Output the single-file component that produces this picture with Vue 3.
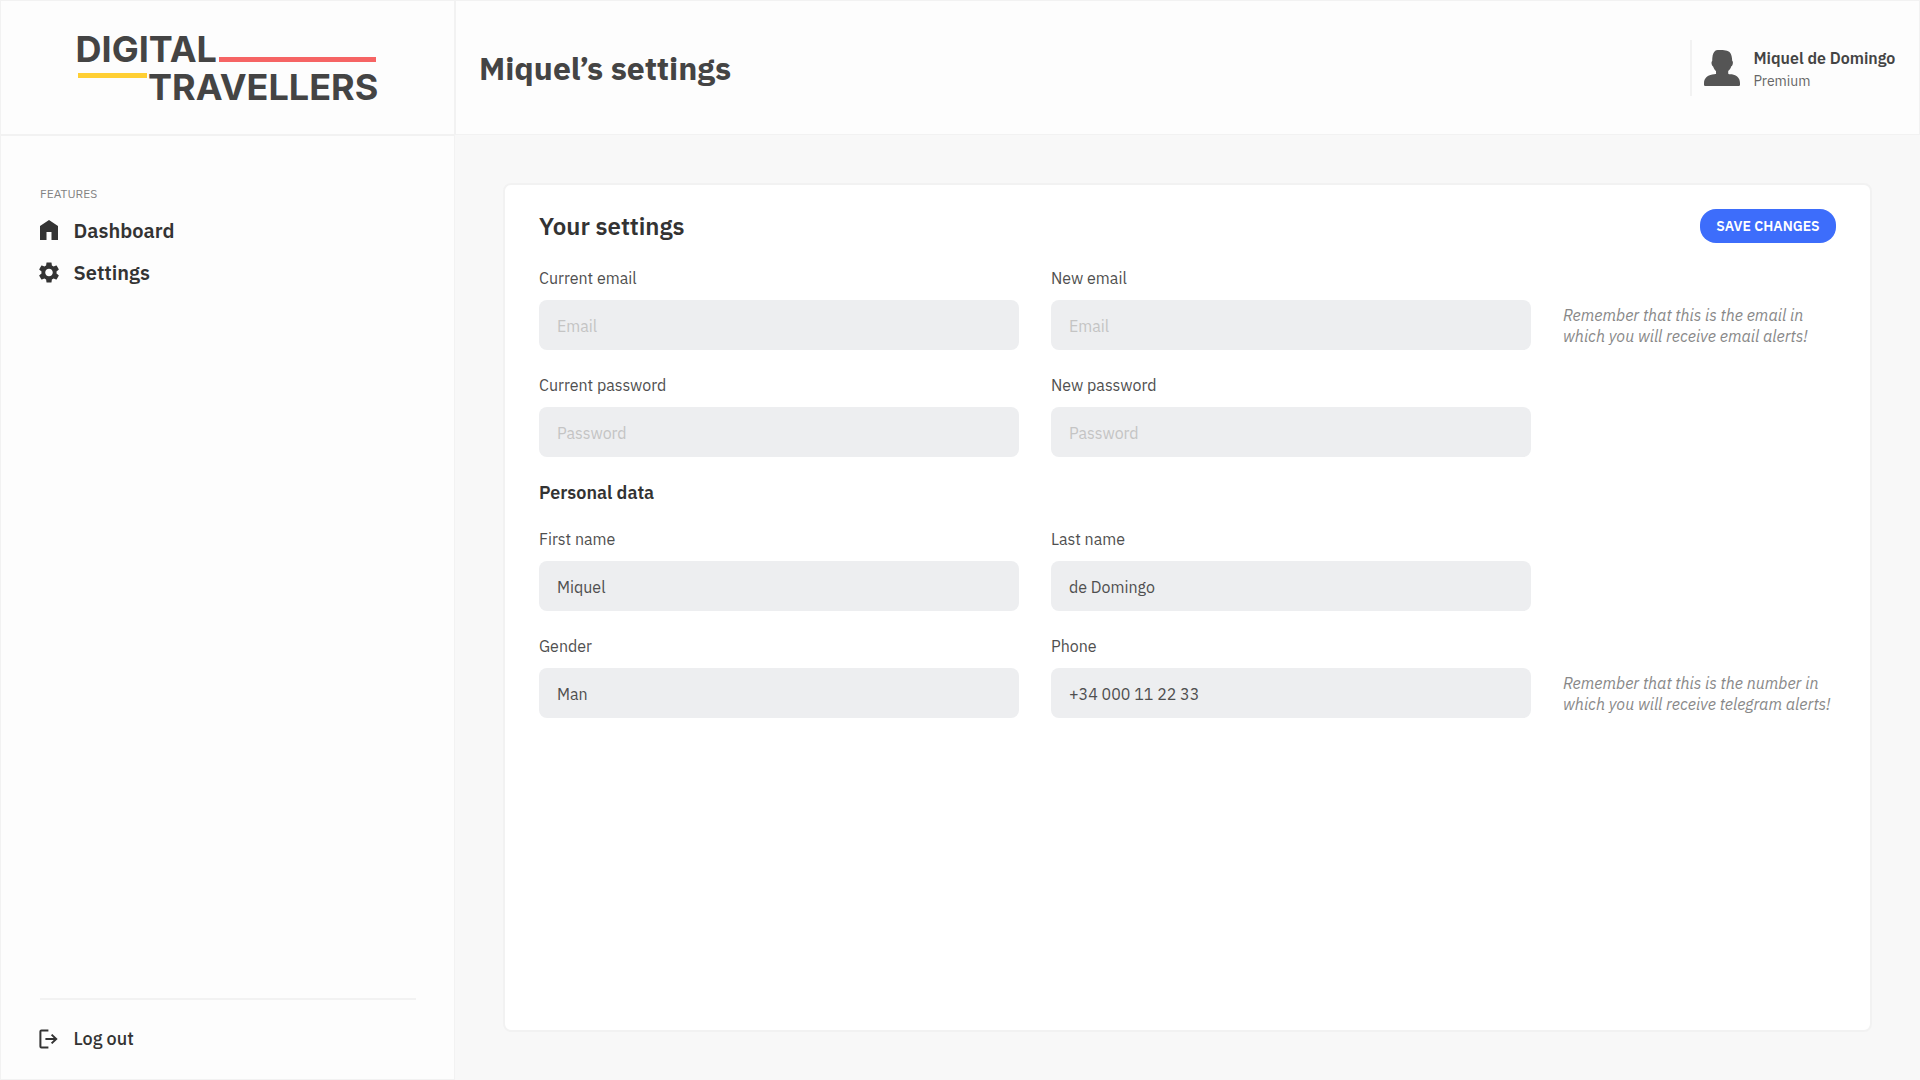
<script setup>
import { reactive } from 'vue'

const nav = [
  { name: 'Dashboard', icon: 'home' },
  { name: 'Settings', icon: 'gear' },
]

const account = reactive([
  {
    fields: [
      { id: 'current-email', label: 'Current email', type: 'email', placeholder: 'Email', value: '' },
      { id: 'new-email', label: 'New email', type: 'email', placeholder: 'Email', value: '' },
    ],
    note: ['Remember that this is the email in', 'which you will receive email alerts!'],
  },
  {
    fields: [
      { id: 'current-password', label: 'Current password', type: 'password', placeholder: 'Password', value: '' },
      { id: 'new-password', label: 'New password', type: 'password', placeholder: 'Password', value: '' },
    ],
  },
])

const personal = reactive([
  {
    fields: [
      { id: 'first-name', label: 'First name', type: 'text', value: 'Miquel' },
      { id: 'last-name', label: 'Last name', type: 'text', value: 'de Domingo' },
    ],
  },
  {
    fields: [
      { id: 'gender', label: 'Gender', type: 'text', value: 'Man' },
      { id: 'phone', label: 'Phone', type: 'tel', value: '+34 000 11 22 33' },
    ],
    note: ['Remember that this is the number in', 'which you will receive telegram alerts!'],
  },
])

const sections = [
  { title: '', rows: account },
  { title: 'Personal data', rows: personal },
]
</script>

<template>
  <div class="page">
    <aside class="sidebar">
      <div class="brand">
        <div class="logo">
          <div class="logo-line"><span class="first">DIGITAL</span><i class="bar red"></i></div>
          <div class="logo-line"><i class="bar yellow"></i><span>TRAVELLERS</span></div>
        </div>
      </div>
      <nav class="menu">
        <div class="menu-label">FEATURES</div>
        <a v-for="item in nav" :key="item.name" class="menu-item">
          <svg v-if="item.icon === 'home'" viewBox="0 0 24 24" class="icon">
            <path d="M12 1L21 7V21H14.5V13H9.5V21H3V7Z" />
          </svg>
          <svg v-else viewBox="0 0 24 24" class="icon">
            <path
              transform="translate(-.6 -1.1) scale(1.05)"
              d="M19.14 12.94c.04-.3.06-.61.06-.94 0-.32-.02-.64-.07-.94l2.03-1.58c.18-.14.23-.41.12-.61l-1.92-3.32c-.12-.22-.37-.29-.59-.22l-2.39.96c-.5-.38-1.03-.7-1.62-.94l-.36-2.54c-.04-.24-.24-.41-.48-.41h-3.84c-.24 0-.43.17-.47.41l-.36 2.54c-.59.24-1.13.57-1.62.94l-2.39-.96c-.22-.08-.47 0-.59.22L2.74 8.87c-.12.21-.08.47.12.61l2.03 1.58c-.05.3-.09.63-.09.94s.02.64.07.94l-2.03 1.58c-.18.14-.23.41-.12.61l1.92 3.32c.12.22.37.29.59.22l2.39-.96c.5.38 1.03.7 1.62.94l.36 2.54c.05.24.24.41.48.41h3.84c.24 0 .44-.17.47-.41l.36-2.54c.59-.24 1.13-.56 1.62-.94l2.39.96c.22.08.47 0 .59-.22l1.92-3.32c.12-.22.07-.47-.12-.61l-2.01-1.58zM12 15.6c-1.98 0-3.6-1.62-3.6-3.6s1.62-3.6 3.6-3.6 3.6 1.62 3.6 3.6-1.62 3.6-3.6 3.6z"
            />
          </svg>
          <span>{{ item.name }}</span>
        </a>
        <div class="menu-foot">
          <a class="menu-item logout">
            <svg viewBox="0 0 24 24" class="icon line">
              <path d="M11.4 3.5H4.4a1 1 0 0 0-1 1v15.1a1 1 0 0 0 1 1h7" />
              <path d="M8.4 12H19M14.6 7.6L19.2 12l-4.6 4.4" />
            </svg>
            <span>Log out</span>
          </a>
        </div>
      </nav>
    </aside>

    <div class="main">
      <header class="topbar">
        <h1>Miquel’s settings</h1>
        <div class="user">
          <svg class="avatar" viewBox="0 0 36 36">
            <path
              d="M10.6 1.600C11.500.3 13 0 17 .1c4.500.2 8.200 1 9.600 3.300 1 1.800 1.500 4.700 1.600 7.400.7.600.9 1.800.6 3-.3 1.400-.8 2.200-1.500 2.500-.6 2-1.700 3.500-3.100 4.700v2.300c0 .6.400.9 1 1h2.700C32.500 25.200 36 28 36 33v1.400c0 1-.6 1.600-1.600 1.600H1.600C.6 36 0 35.400 0 34.400V33c0-5 3.500-7.800 8.200-8.600 1.200-.1 2.500-.1 3.500-.3.500-.1.400-.6.300-1.100v-2c-1.300-1.200-2.300-2.700-2.900-4.600-.8-.4-1.200-1.300-1.500-2.600-.2-1.300-.1-2.300.6-2.900 0-3.500.4-7.300 2.400-9.300Z"
            />
          </svg>
          <div class="who">
            <div class="user-name">Miquel de Domingo</div>
            <div class="plan">Premium</div>
          </div>
        </div>
      </header>

      <main class="content">
        <section class="card">
          <div class="card-head">
            <h2>Your settings</h2>
            <button type="button" class="save">SAVE CHANGES</button>
          </div>
          <template v-for="section in sections" :key="section.title">
            <h3 v-if="section.title">{{ section.title }}</h3>
            <div class="rows">
              <div v-for="(row, r) in section.rows" :key="r" class="row">
                <div v-for="f in row.fields" :key="f.id" class="field">
                  <label :for="f.id">{{ f.label }}</label>
                  <input :id="f.id" v-model="f.value" :type="f.type" :placeholder="f.placeholder" />
                </div>
                <p v-if="row.note" class="note">
                  <span v-for="line in row.note" :key="line">{{ line }}</span>
                </p>
              </div>
            </div>
          </template>
        </section>
      </main>
    </div>
  </div>
</template>

<style>
body {
  margin: 0;
}
</style>

<style scoped>
.page,
.page * {
  box-sizing: border-box;
}
.page {
  display: flex;
  width: 1920px;
  height: 1080px;
  overflow: hidden;
  background: #f8f8f8;
  font-family: 'IBM Plex Sans', Roboto, sans-serif;
  color: #333;
}
.sidebar {
  display: flex;
  flex-direction: column;
  flex: none;
  width: 455px;
}
.brand {
  height: 135px;
  padding: 29px 0 0 74px;
  border: 1px solid #f2f2f2;
  background: #fdfdfd;
}
.logo {
  width: 301px;
  font: 700 36px/38px Inter, sans-serif;
  color: #444;
}
.logo-line {
  display: flex;
  height: 38px;
  white-space: nowrap;
}
.first {
  margin-left: 0.6px;
}
.bar {
  flex: none;
  height: 5px;
}
.red {
  width: 157px;
  margin: 27px 0 0 auto;
  background: #f66464;
}
.yellow {
  width: 69px;
  margin: 5px 1px 0 3px;
  background: #ffcf33;
}
.menu {
  display: flex;
  flex-direction: column;
  flex: 1;
  padding: 50px 39px 23px;
  border: 1px solid #f2f2f2;
  background: #fdfdfd;
}
.menu-label {
  margin-bottom: 8px;
  font-size: 12px;
  line-height: 16px;
  color: #828282;
}
.menu-item {
  display: flex;
  align-items: center;
  gap: 12.5px;
  height: 42px;
  margin-left: -3px;
  font-size: 20px;
  font-weight: 600;
  line-height: 42px;
}
.icon {
  flex: none;
  width: 24px;
  height: 24px;
  fill: #333;
}
.icon.line {
  fill: none;
  stroke: #333;
  stroke-width: 2;
}
.menu-foot {
  margin: auto -1px 0 0;
  padding-top: 21px;
  border-top: 2px solid #f2f2f2;
}
.logout {
  height: 35px;
  font-size: 18px;
  font-weight: 500;
  line-height: 35px;
}
.main {
  display: flex;
  flex-direction: column;
  flex: 1;
  min-width: 0;
}
.topbar {
  display: flex;
  align-items: center;
  height: 135px;
  padding-left: 23px;
  border: 1px solid #f2f2f2;
  background: #fdfdfd;
}
h1,
h2,
h3,
p {
  margin: 0;
}
h1 {
  padding-top: 1px;
  font-size: 32px;
  font-weight: 700;
  line-height: 38px;
  color: #444;
}
.user {
  display: flex;
  width: 229px;
  height: 56px;
  margin: 1px 0 0 auto;
  padding-left: 12px;
  border-left: 2px solid #f2f2f2;
}
.avatar {
  flex: none;
  width: 36px;
  height: 36px;
  margin: 10px 13.5px 0 0;
  fill: #555;
}
.who {
  padding-top: 8px;
}
.user-name {
  font-size: 16px;
  font-weight: 600;
  line-height: 21px;
  color: #444;
  white-space: nowrap;
}
.plan {
  margin-top: 2px;
  font-size: 14px;
  line-height: 20px;
  color: #666;
}
.content {
  display: flex;
  flex: 1;
  padding: 48px;
}
.card {
  flex: 1;
  min-width: 0;
  padding: 24px 34px;
  border: 2px solid #f2f2f2;
  border-radius: 8px;
  background: #fff;
}
.card-head {
  display: flex;
  justify-content: space-between;
  align-items: flex-start;
  height: 36px;
  margin-bottom: 23px;
}
h2 {
  font-size: 24px;
  font-weight: 600;
  line-height: 34px;
}
.save {
  width: 136px;
  height: 34px;
  padding: 0;
  border: 0;
  border-radius: 16px;
  background: #3d6dfb;
  font: 600 14px/34px 'IBM Plex Sans', Roboto, sans-serif;
  color: #fff;
}
h3 {
  margin: 18px 0 19px;
  font-size: 18px;
  font-weight: 600;
  line-height: 35px;
}
.rows {
  display: flex;
  flex-direction: column;
  gap: 25px;
}
.row {
  display: flex;
  gap: 32px;
}
.field {
  display: flex;
  flex: none;
  flex-direction: column;
  gap: 11px;
  width: 480px;
}
label {
  font-size: 16px;
  line-height: 21px;
  color: #4f4f4f;
}
input {
  height: 50px;
  padding: 1px 18px 0;
  border: 0;
  border-radius: 8px;
  outline: 0;
  background: #edeef0;
  font: 400 16px/21px 'IBM Plex Sans', Roboto, sans-serif;
  color: #4f4f4f;
}
input::placeholder {
  color: #c4c4c4;
  opacity: 1;
}
.note {
  padding-top: 37px;
  font-size: 16px;
  font-style: italic;
  line-height: 21px;
  color: #888;
  white-space: nowrap;
}
.note span {
  display: block;
}
</style>
